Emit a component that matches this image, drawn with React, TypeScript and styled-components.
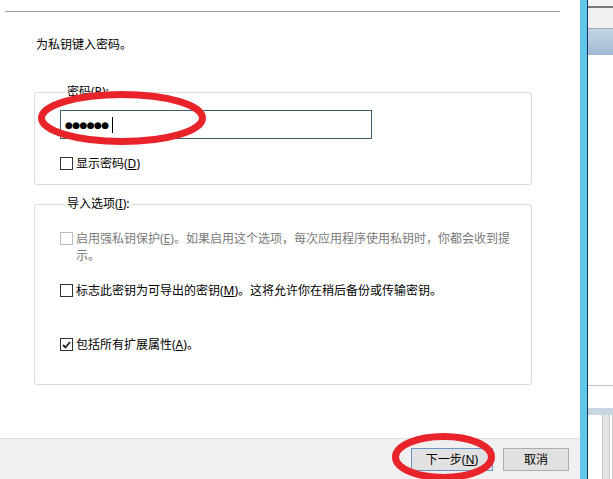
import React from 'react';
import styled, { createGlobalStyle } from 'styled-components';

const GlobalStyle = createGlobalStyle`
  html, body {
    margin: 0;
    padding: 0;
    width: 613px;
    height: 479px;
    overflow: hidden;
    background: #ffffff;
  }
  body {
    font-family: "Noto Sans", "Noto Sans CJK SC", sans-serif;
    font-size: 12px;
    color: #000000;
  }
`;

const Screen = styled.div`
  position: relative;
  display: flex;
  width: 613px;
  height: 479px;
`;

const Dialog = styled.div`
  display: flex;
  flex-direction: column;
  width: 580px;
  height: 100%;
  background: #ffffff;
`;

const Content = styled.div`
  flex: 1;
`;

const Separator = styled.div`
  margin: 11px 20px 0 5px;
  border-top: 1px solid #a0a0a0;
`;

const Intro = styled.div`
  margin-top: 25px;
  padding-left: 36px;
  line-height: 16px;
`;

const Group = styled.fieldset<{ $top: number; $pad: string }>`
  box-sizing: border-box;
  width: 498px;
  margin: ${(p) => p.$top}px 0 0 34px;
  padding: ${(p) => p.$pad};
  border: 1px solid #dcdcdc;
  border-radius: 3px;
  min-width: 0;
`;

const Legend = styled.legend`
  margin-left: 5px;
  padding: 0 2px;
  line-height: 16px;
`;

const U = styled.span`
  text-decoration: underline;
  text-underline-offset: 1px;
`;

const TextBox = styled.div`
  box-sizing: border-box;
  display: flex;
  align-items: center;
  width: 312px;
  height: 29px;
  padding-left: 4px;
  border: 1px solid #3d5a6e;
  background: #ffffff;
`;

const Dots = styled.span`
  font-family: "DejaVu Sans", sans-serif;
  font-size: 9px;
  letter-spacing: -0.6px;
  color: #000000;
`;

const Caret = styled.span`
  width: 1px;
  height: 16px;
  margin-left: 3px;
  background: #000000;
`;

const Row = styled.div<{ $top: number; $disabled?: boolean }>`
  display: flex;
  align-items: flex-start;
  margin-top: ${(p) => p.$top}px;
  line-height: 17px;
  color: ${(p) => (p.$disabled ? '#7a7a7a' : '#000000')};
`;

const Box = styled.span<{ $disabled?: boolean }>`
  box-sizing: border-box;
  display: flex;
  align-items: center;
  justify-content: center;
  flex: none;
  width: 13px;
  height: 13px;
  margin: 2px 3px 0 0;
  border: 1px solid ${(p) => (p.$disabled ? '#bcbcbc' : '#333333')};
  background: #ffffff;
`;

const Label = styled.span`
  white-space: nowrap;
`;

const Footer = styled.div`
  display: flex;
  justify-content: flex-end;
  gap: 10px;
  height: 41px;
  padding: 9px 11px 0 0;
  box-sizing: border-box;
  border-top: 1px solid #dfdfdf;
  background: #f0f0f0;
  flex: none;
`;

const Button = styled.div<{ $width: number; $default?: boolean }>`
  box-sizing: border-box;
  display: flex;
  align-items: center;
  justify-content: center;
  width: ${(p) => p.$width}px;
  height: 23px;
  border: 1px solid ${(p) => (p.$default ? '#6a94c2' : '#adadad')};
  background: #e1e1e1;
  line-height: 16px;
`;

const BlueEdge = styled.div`
  width: 7px;
  height: 100%;
  background: #60c7ea;
  border-right: 1px solid #14325a;
  flex: none;
`;

const Pane = styled.div`
  display: flex;
  flex-direction: column;
  flex: 1;
  height: 100%;
  background: #ffffff;
`;

const Strip = styled.div<{ $h: number; $bg: string }>`
  height: ${(p) => p.$h}px;
  background: ${(p) => p.$bg};
  flex: none;
`;

const ListArea = styled.div`
  display: flex;
  flex: 1;
`;

const ListCell = styled.div<{ $w?: number; $bg: string }>`
  width: ${(p) => (p.$w ? `${p.$w}px` : 'auto')};
  flex: ${(p) => (p.$w ? 'none' : '1')};
  background: ${(p) => p.$bg};
  border-right: 1px solid #c8c8c8;
`;

const Marks = styled.svg`
  position: absolute;
  left: 0;
  top: 0;
  pointer-events: none;
`;

const Check = () => (
  <svg width="9" height="8" viewBox="0 0 9 8">
    <path d="M1 4 L3.5 6.5 L8 1" fill="none" stroke="#222222" strokeWidth="1.8" />
  </svg>
);

export default function App() {
  return (
    <>
      <GlobalStyle />
      <Screen>
        <Dialog>
          <Content>
            <Separator />
            <Intro>为私钥键入密码。</Intro>

            <Group $top={31} $pad="10px 25px 12px 25px">
              <Legend>
                密码(<U>P</U>):
              </Legend>
              <TextBox>
                <Dots>●●●●●●</Dots>
                <Caret />
              </TextBox>
              <Row $top={16}>
                <Box />
                <Label>
                  显示密码(<U>D</U>)
                </Label>
              </Row>
            </Group>

            <Group $top={11} $pad="18px 8px 31px 25px">
              <Legend>
                导入选项(<U>I</U>):
              </Legend>
              <Row $top={0} $disabled>
                <Box $disabled />
                <Label>
                  启用强私钥保护(<U>E</U>)。如果启用这个选项，每次应用程序使用私钥时，你都会收到提
                  <br />
                  示。
                </Label>
              </Row>
              <Row $top={18}>
                <Box />
                <Label>
                  标志此密钥为可导出的密钥(<U>M</U>)。这将允许你在稍后备份或传输密钥。
                </Label>
              </Row>
              <Row $top={37}>
                <Box>
                  <Check />
                </Box>
                <Label>
                  包括所有扩展属性(<U>A</U>)。
                </Label>
              </Row>
            </Group>
          </Content>

          <Footer>
            <Button $width={82} $default>
              下一步(<U>N</U>)
            </Button>
            <Button $width={66}>取消</Button>
          </Footer>
        </Dialog>

        <BlueEdge />

        <Pane>
          <Strip $h={6} $bg="#f3f3f3" />
          <Strip $h={2} $bg="#7a7a7a" />
          <Strip $h={20} $bg="#f0f0f0" />
          <Strip $h={1} $bg="#a9a9a9" />
          <Strip $h={26} $bg="linear-gradient(#c3d5e7, #a3bad3)" />
          <Strip $h={330} $bg="#ffffff" />
          <Strip $h={1} $bg="#c0c0c0" />
          <Strip $h={22} $bg="#ffffff" />
          <Strip $h={7} $bg="#c8d7df" />
          <ListArea>
            <ListCell $w={14} $bg="#ffffff" />
            <ListCell $w={6} $bg="#e4e4e4" />
            <ListCell $bg="#ffffff" />
          </ListArea>
        </Pane>

        <Marks width="613" height="479" viewBox="0 0 613 479">
          <ellipse cx="122" cy="118" rx="80.5" ry="23.5" fill="none" stroke="#e8232a" strokeWidth="7" />
          <ellipse cx="443.5" cy="457" rx="48" ry="20.5" fill="none" stroke="#e8232a" strokeWidth="7" />
        </Marks>
      </Screen>
    </>
  );
}
